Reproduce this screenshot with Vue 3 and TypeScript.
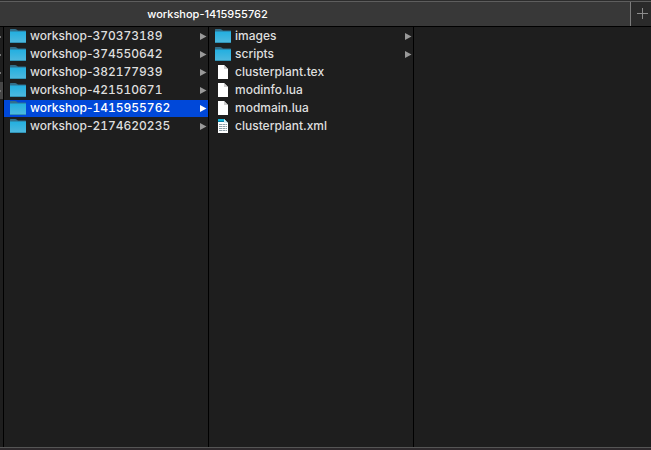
<script setup lang="ts">
import { ref } from 'vue'

type Kind = 'folder' | 'file' | 'xml'
interface Entry { name: string; id?: string; kind: Kind }

const folders: Entry[] = [
  { name: 'workshop-', id: '370373189', kind: 'folder' },
  { name: 'workshop-', id: '374550642', kind: 'folder' },
  { name: 'workshop-', id: '382177939', kind: 'folder' },
  { name: 'workshop-', id: '421510671', kind: 'folder' },
  { name: 'workshop-', id: '1415955762', kind: 'folder' },
  { name: 'workshop-', id: '2174620235', kind: 'folder' },
]
const contents: Entry[] = [
  { name: 'images', kind: 'folder' },
  { name: 'scripts', kind: 'folder' },
  { name: 'clusterplant.tex', kind: 'file' },
  { name: 'modinfo.lua', kind: 'file' },
  { name: 'modmain.lua', kind: 'file' },
  { name: 'clusterplant.xml', kind: 'xml' },
]
const columns: Entry[][] = [folders, contents]
const selected = ref('workshop-1415955762')
const label = (entry: Entry): string => entry.name + (entry.id ?? '')
</script>

<template>
  <div class="finder">
    <header class="tabs">
      <button class="tab" type="button">{{ selected }}</button>
      <button class="add" type="button" aria-label="New tab">
        <svg width="11" height="11" viewBox="0 0 11 11"><path d="M5.5 0v11M0 5.5h11" stroke="#8c8c8c" /></svg>
      </button>
    </header>
    <main class="columns">
      <div class="parent">
        <span v-for="n in 4" :key="n" class="stub" :class="{ open: n === 4 }">
          <svg width="1" height="2" viewBox="0 0 1 2"><path d="M0 0H1V2H0z" fill="#777" /></svg>
        </span>
      </div>
      <ul v-for="(column, i) in columns" :key="i" class="column">
        <li v-for="entry in column" :key="label(entry)">
          <button
            type="button"
            class="row"
            :class="{ selected: i === 0 && label(entry) === selected }"
            @click="i === 0 && (selected = label(entry))"
          >
            <svg v-if="entry.kind === 'folder'" class="icon" width="16" height="15" viewBox="0 0 16 15">
              <defs>
                <linearGradient id="folder-face" x1="0" y1="0" x2="0" y2="1">
                  <stop offset="0" stop-color="#22afe0" />
                  <stop offset="1" stop-color="#50b9de" />
                </linearGradient>
              </defs>
              <path d="M0 .5Q0 0 .6 0H5.2Q6 0 6.5 .5L8 1.4H15.4Q16 1.4 16 2V4H0z" fill="#326f8b" />
              <path d="M0 2.5H16V13.5Q16 14 15.5 14H.5Q0 14 0 13.5z" fill="url(#folder-face)" />
              <path d="M0 13.5H16" stroke="#3293b6" />
            </svg>
            <svg v-else class="icon" width="16" height="15" viewBox="0 0 16 15">
              <path d="M3 0H9L13 4V14H3z" fill="#fff" />
              <path v-if="entry.kind === 'file'" d="M9 0V4H13z" fill="#cfcfcf" />
              <template v-else>
                <path d="M3 0H9L12 3H3z" fill="#12b5da" />
                <path d="M3 2.5H10" stroke="#087a9d" />
                <path d="M9 0V4H13z" fill="#d9edf2" />
                <path d="M4 5.5H12M4 7.5H12M4 9.5H12M4 11.5H12" stroke="#8f9fa7" stroke-dasharray="3 .5" />
              </template>
            </svg>
            <span class="name">{{ entry.name }}<span v-if="entry.id" class="id">{{ entry.id }}</span></span>
            <svg v-if="entry.kind === 'folder'" class="arrow" width="7" height="7" viewBox="0 0 7 7">
              <path d="M0 0L6.5 3.5L0 7z" fill="currentColor" />
            </svg>
          </button>
        </li>
      </ul>
      <div class="empty"></div>
    </main>
    <footer class="edge"></footer>
  </div>
</template>

<style>
body {
  margin: 0;
  background: #1e1e1e;
}
</style>

<style scoped>
.finder {
  display: flex;
  flex-direction: column;
  height: 100vh;
  font-family: Inter, "Liberation Sans", sans-serif;
  font-size: 12px;
  font-weight: 500;
  color: #dedede;
  background: #1e1e1e;
}
button {
  border: 0;
  margin: 0;
  padding: 0;
  font: inherit;
  color: inherit;
  background: none;
}
svg {
  display: block;
  flex: none;
}
.tabs {
  display: flex;
  box-sizing: border-box;
  height: 27px;
  flex: none;
  border-top: 1px solid #2c2c2c;
  border-bottom: 1px solid #000;
  background: #383838;
  box-shadow: inset 0 1px #5e5e5e;
}
.tab {
  flex: 1;
  padding: 1px 215px 0 0;
  font-size: 11px;
  line-height: 24px;
  color: #fff;
  text-align: center;
}
.add {
  display: flex;
  box-sizing: border-box;
  width: 21px;
  margin-top: 1px;
  padding: 6px 0 0 6px;
  border-left: 1px solid #7c7c7c;
  background: #2a2a2a;
}
.columns {
  display: flex;
  flex: 1;
  min-height: 0;
}
.parent,
.column {
  display: flex;
  flex-direction: column;
  box-sizing: border-box;
  gap: 1px;
  padding: 1px 0 0;
  border-right: 1px solid #000;
}
.parent {
  width: 4px;
}
.stub {
  display: flex;
  align-items: center;
  height: 17px;
}
.open {
  background: #464646;
}
.column {
  width: 205px;
  margin: 0;
  list-style: none;
}
.row {
  display: flex;
  align-items: center;
  width: 100%;
  height: 17px;
  padding: 0 1px 0 6px;
  text-align: left;
}
.name {
  flex: 1;
  align-self: flex-start;
  margin-left: 4px;
  line-height: 15px;
  white-space: nowrap;
}
.id {
  font-variant-numeric: tabular-nums;
}
.arrow {
  color: #999;
}
.selected {
  color: #fff;
  background: #0048d9;
}
.selected .arrow {
  color: #fff;
}
.empty {
  flex: 1;
}
.edge {
  height: 3px;
  box-sizing: border-box;
  flex: none;
  border-top: 1px solid #555;
  background: #2d292c;
}
</style>
